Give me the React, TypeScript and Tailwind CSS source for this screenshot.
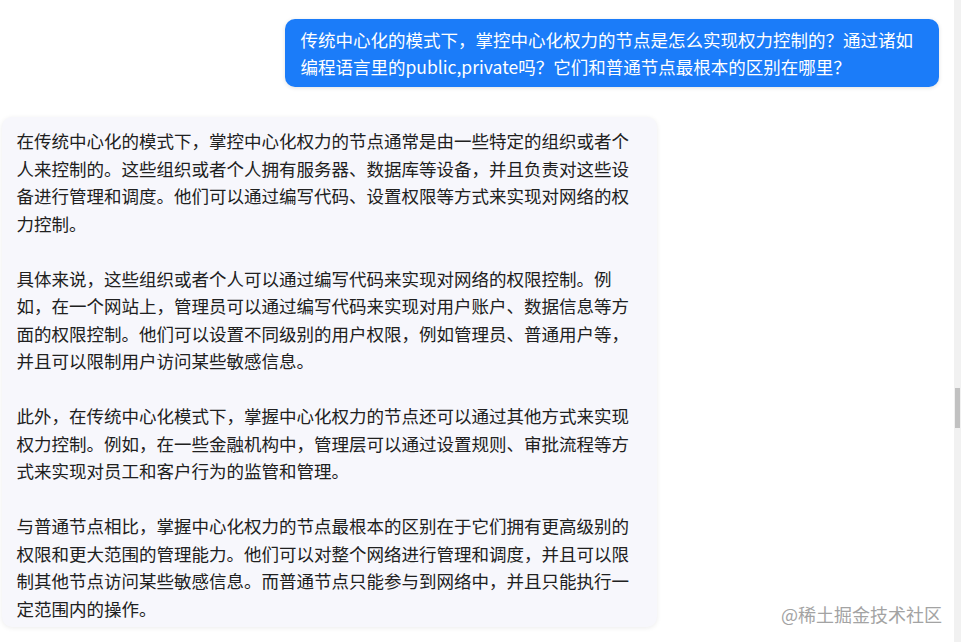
import React from "react";

const userLines = [
  "传统中心化的模式下，掌控中心化权力的节点是怎么实现权力控制的？通过诸如",
  "编程语言里的public,private吗？它们和普通节点最根本的区别在哪里？",
];

const paragraphs: string[][] = [
  [
    "在传统中心化的模式下，掌控中心化权力的节点通常是由一些特定的组织或者个",
    "人来控制的。这些组织或者个人拥有服务器、数据库等设备，并且负责对这些设",
    "备进行管理和调度。他们可以通过编写代码、设置权限等方式来实现对网络的权",
    "力控制。",
  ],
  [
    "具体来说，这些组织或者个人可以通过编写代码来实现对网络的权限控制。例",
    "如，在一个网站上，管理员可以通过编写代码来实现对用户账户、数据信息等方",
    "面的权限控制。他们可以设置不同级别的用户权限，例如管理员、普通用户等，",
    "并且可以限制用户访问某些敏感信息。",
  ],
  [
    "此外，在传统中心化模式下，掌握中心化权力的节点还可以通过其他方式来实现",
    "权力控制。例如，在一些金融机构中，管理层可以通过设置规则、审批流程等方",
    "式来实现对员工和客户行为的监管和管理。",
  ],
  [
    "与普通节点相比，掌握中心化权力的节点最根本的区别在于它们拥有更高级别的",
    "权限和更大范围的管理能力。他们可以对整个网络进行管理和调度，并且可以限",
    "制其他节点访问某些敏感信息。而普通节点只能参与到网络中，并且只能执行一",
    "定范围内的操作。",
  ],
];

export default function App() {
  return (
    <div
      className="relative flex h-[642px] w-full overflow-hidden bg-white"
      style={{ fontFamily: '"Noto Sans CJK SC", "Noto Sans", sans-serif' }}
    >
      <main className="flex flex-1 flex-col pt-[18.5px]">
        <div className="mr-[15.5px] w-[654px] self-end rounded-[10px] bg-[#1b7cf9] px-[16px] py-[7px] text-[17.5px] leading-[27px] text-white shadow-[0_1px_4px_rgba(0,0,0,0.12)]">
          {userLines.map((l, i) => (
            <div key={i} className="whitespace-nowrap">
              {l}
            </div>
          ))}
        </div>
        <div className="ml-[1.5px] mt-[30px] w-[655px] rounded-[10px] bg-[#f7f7fc] pb-[5px] pl-[15px] pr-[8px] pt-[10.5px] text-[17.5px] leading-[27.5px] text-[#202020] shadow-[0_1px_5px_rgba(0,0,0,0.08)]">
          {paragraphs.map((p, pi) => (
            <div key={pi} className={pi > 0 ? "mt-[27.5px]" : ""}>
              {p.map((l, li) => (
                <div key={li} className="whitespace-nowrap">
                  {l}
                </div>
              ))}
            </div>
          ))}
        </div>
      </main>
      <aside className="w-[7px] bg-[#f1f1f1] pt-[388px]">
        <div className="ml-[1px] h-[40px] w-[5px] bg-[#c1c1c1]" />
      </aside>
      <div
        className="absolute bottom-[18px] right-[19px] text-[18px] leading-[20px] text-[#a3a3a3]"
        style={{ textShadow: "0 0 2px #ffffff, 0 0 1px #ffffff" }}
      >
        @稀土掘金技术社区
      </div>
    </div>
  );
}
